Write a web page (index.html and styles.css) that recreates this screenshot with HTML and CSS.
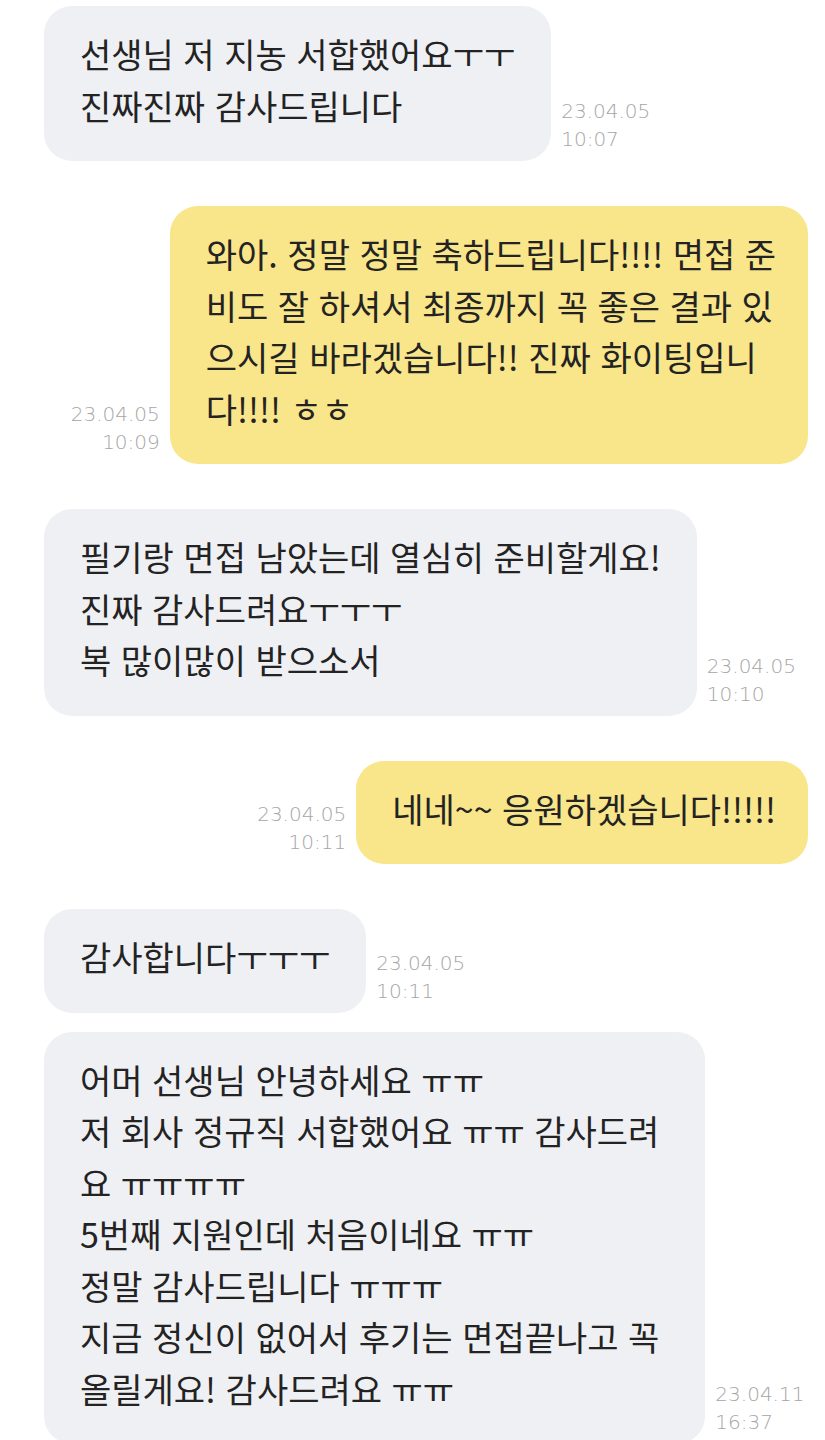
FILE: index.html
```html
<!DOCTYPE html>
<html lang="ko">
<head>
    <meta charset="UTF-8">
    <meta name="viewport" content="width=device-width, initial-scale=1.0">
    <title>대화</title>
    <link rel="stylesheet" href="styles.css">
</head>
<body>
    <div class="chat">
        <div class="row left">
            <div class="bubble gray">선생님 저 지농 서합했어요ㅜㅜ<br>진짜진짜 감사드립니다</div>
            <div class="time">23.04.05<br>10:07</div>
        </div>

        <div class="row right">
            <div class="time">23.04.05<br>10:09</div>
            <div class="bubble yellow">와아. 정말 정말 축하드립니다!!!! 면접 준<br>비도 잘 하셔서 최종까지 꼭 좋은 결과 있<br>으시길 바라겠습니다!! 진짜 화이팅입니<br>다!!!! ㅎㅎ</div>
        </div>

        <div class="row left">
            <div class="bubble gray">필기랑 면접 남았는데 열심히 준비할게요!<br>진짜 감사드려요ㅜㅜㅜ<br>복 많이많이 받으소서</div>
            <div class="time">23.04.05<br>10:10</div>
        </div>

        <div class="row right">
            <div class="time">23.04.05<br>10:11</div>
            <div class="bubble yellow">네네~~ 응원하겠습니다!!!!!</div>
        </div>

        <div class="row left">
            <div class="bubble gray">감사합니다ㅜㅜㅜ</div>
            <div class="time">23.04.05<br>10:11</div>
        </div>

        <div class="row left next">
            <div class="bubble gray wrapped">어머 선생님 안녕하세요 ㅠㅠ<br>저 회사 정규직 서합했어요 ㅠㅠ 감사드려<br>요 ㅠㅠㅠㅠ<br>5번째 지원인데 처음이네요 ㅠㅠ<br>정말 감사드립니다 ㅠㅠㅠ<br>지금 정신이 없어서 후기는 면접끝나고 꼭<br>올릴게요! 감사드려요 ㅠㅠ</div>
            <div class="time">23.04.11<br>16:37</div>
        </div>
    </div>
</body>
</html>
```

FILE: styles.css
```css
body {
    margin: 0;
    background: #ffffff;
    font-family: "Noto Sans CJK KR", "Noto Sans", sans-serif;
    color: #232323;
}

.chat {
    padding: 6px 17px 0 44px;
    display: flex;
    flex-direction: column;
    gap: 45px;
}

.row {
    display: flex;
    align-items: flex-end;
    gap: 10px;
}
.row.right {
    justify-content: flex-end;
}
.row.next {
    margin-top: -26px;
}

.bubble {
    font-size: 34px;
    line-height: 51.5px;
    padding: 22px 36px 30px 36px;
    border-radius: 28px;
    white-space: nowrap;
}
.bubble.wrapped {
    padding-right: 46px;
}
.gray {
    background: #eff0f4;
}
.yellow {
    background: #f9e58a;
    padding-right: 32px;
}

.time {
    font-family: "DejaVu Sans", "Noto Sans", sans-serif;
    font-size: 20px;
    line-height: 28px;
    font-weight: 200;
    color: #a6a6a6;
    padding-bottom: 8px;
}
.right .time {
    text-align: right;
}
```
